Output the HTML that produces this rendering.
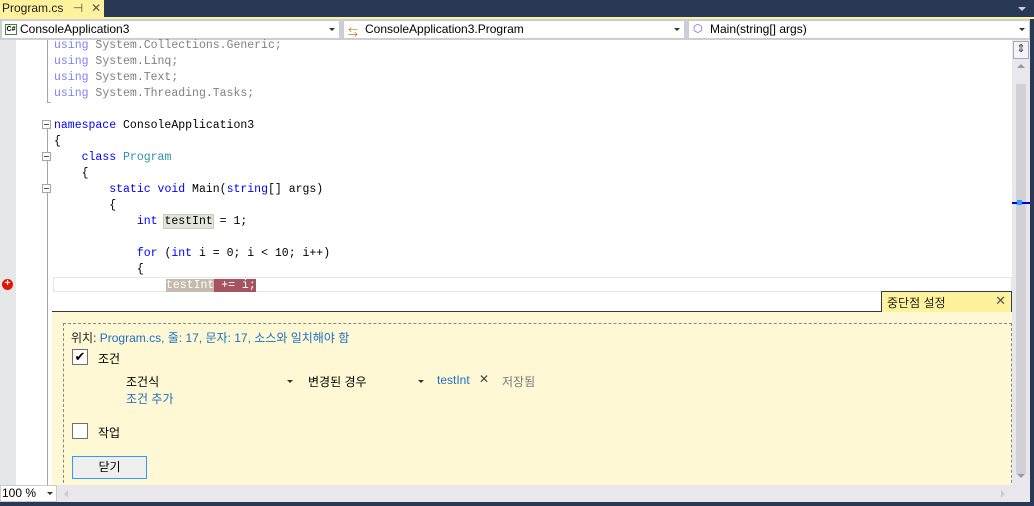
<!DOCTYPE html>
<html><head><meta charset="utf-8"><style>
*{margin:0;padding:0;box-sizing:border-box}
body{width:1034px;height:506px;background:#293955;position:relative;overflow:hidden;font-family:"Segoe UI","Liberation Sans","Noto Sans CJK KR",sans-serif;font-size:12px}
.a{position:absolute}
.tab{left:0;top:0;width:104px;height:18px;background:#fff29d;color:#1e1e1e;font-size:12px;padding:1px 0 0 2px}
.ybar{left:0;top:17px;width:1034px;height:2px;background:#fff29d}
.nav{left:0;top:19px;width:1030px;height:21px;background:#cccedb}
.cb{top:20px;height:19px;background:#fff;border:1px solid #ccc;font-size:12px;color:#000;padding:1px 0 0 18px}
.cb .dd{position:absolute;right:4px;top:7px;border-left:3px solid transparent;border-right:3px solid transparent;border-top:3px solid #333}
.gut{left:0;top:40px;width:16px;height:445px;background:#e6e7e8}
.ed{left:16px;top:40px;width:996px;height:445px;background:#fff}
.code{font-family:"Liberation Mono",monospace;font-size:11.5px;line-height:16px;white-space:pre;color:#000}
.k{color:#0000ff}.t{color:#2b91af}.g{color:#808080}.gk{color:#8080ff}
.ol{left:47px;width:1px;background:#a5a5a5}
.box{left:42px;width:9px;height:9px;border:1px solid #a5a5a5;background:#fff}
.box:after{content:"";position:absolute;left:1px;top:3px;width:5px;height:1px;background:#555}
.vs{left:1012px;top:40px;width:18px;height:445px;background:#e8e8ec}
.hs{left:0;top:485px;width:1030px;height:17px;background:#e8e8ec}
</style></head><body>
<div class="a tab">Program.cs <span style="color:#555;margin-left:6px">⊣</span><span style="color:#555;margin-left:8px">✕</span></div>
<div class="a ybar"></div>
<div class="a nav"></div>
<div class="a cb" style="left:1px;width:339px"><span class="a" style="left:3px;top:3px;width:12px;height:11px;border:1px solid #388a34;font-size:7px;line-height:9px;text-align:center;font-weight:bold">C#</span>ConsoleApplication3<span class="dd"></span></div>
<div class="a cb" style="left:343px;width:342px;padding-left:21px"><span class="a" style="left:4px;top:3px;color:#c27d1a;font-size:10px">⇆</span>ConsoleApplication3.Program<span class="dd"></span></div>
<div class="a cb" style="left:688px;width:342px;padding-left:21px"><span class="a" style="left:4px;top:1px;color:#8a4fc9;font-size:11px">⬡</span>Main(string[] args)<span class="dd"></span></div>
<div class="a" style="left:1018px;top:7px;border-left:4px solid transparent;border-right:4px solid transparent;border-top:4px solid #ccd"></div>
<div class="a gut"></div>
<div class="a ed"></div>
<div class="a ol" style="top:40px;height:63px"></div>
<div class="a" style="left:47px;top:102px;width:4px;height:1px;background:#a5a5a5"></div>
<div class="a ol" style="top:126px;height:359px"></div>
<div class="a box" style="top:120px"></div>
<div class="a box" style="top:152px"></div>
<div class="a box" style="top:184px"></div>
<div class="a code" style="left:54px;top:38px"><span class="gk">using</span> <span class="g">System.Collections.Generic;</span>
<span class="gk">using</span> <span class="g">System.Linq;</span>
<span class="gk">using</span> <span class="g">System.Text;</span>
<span class="gk">using</span> <span class="g">System.Threading.Tasks;</span>

<span class="k">namespace</span> ConsoleApplication3
{
    <span class="k">class</span> <span class="t">Program</span>
    {
        <span class="k">static</span> <span class="k">void</span> Main(<span class="k">string</span>[] args)
        {
            <span class="k">int</span> <span style="background:#e1e5d7;outline:1px solid #c8cbbd">testInt</span> = 1;

            <span class="k">for</span> (<span class="k">int</span> i = 0; i &lt; 10; i++)
            {
</div>
<div class="a" style="left:53px;top:277px;width:959px;height:15px;border:1px solid #e6e6e6"></div>
<div class="a code" style="left:166px;top:278px;color:#fff"><span style="background:#c6b9ad">testInt</span><span style="background:#a5545f"> += i;</span></div>
<div class="a" style="left:2px;top:279px;width:11px;height:11px;border-radius:50%;background:#e51400;color:#fff;font-size:10px;line-height:10px;text-align:center;font-weight:bold">+</div>
<div class="a" style="left:52px;top:311px;width:960px;height:174px;background:#fef9d4;border-top:1px solid #2d3a4f"></div>
<div class="a" style="left:881px;top:291px;width:131px;height:21px;background:#fff29d;border:1px solid #2d3a4f;border-bottom:none;padding:2px 0 0 5px;color:#1e1e1e">중단점 설정<span class="a" style="right:5px;top:1px;color:#555;font-size:13px">✕</span></div>
<div class="a" style="left:63px;top:323px;width:949px;height:170px;border:1px dashed #888;border-bottom:none"></div>
<div class="a" style="left:71px;top:329px;color:#1e1e1e">위치: <span style="color:#1e6fc7">Program.cs, 줄: 17, 문자: 17, 소스와 일치해야 함</span></div>
<div class="a" style="left:72px;top:349px;width:16px;height:16px;border:1px solid #707070;background:#fff;font-size:13px;line-height:14px;text-align:center">✔</div>
<div class="a" style="left:98px;top:350px">조건</div>
<div class="a" style="left:126px;top:373px">조건식</div>
<div class="a" style="left:287px;top:380px;border-left:3px solid transparent;border-right:3px solid transparent;border-top:3px solid #333"></div>
<div class="a" style="left:308px;top:373px">변경된 경우</div>
<div class="a" style="left:418px;top:380px;border-left:3px solid transparent;border-right:3px solid transparent;border-top:3px solid #333"></div>
<div class="a" style="left:437px;top:373px;color:#1e6fc7">testInt</div>
<div class="a" style="left:479px;top:372px;color:#444">✕</div>
<div class="a" style="left:502px;top:373px;color:#777">저장됨</div>
<div class="a" style="left:126px;top:390px;color:#1e6fc7">조건 추가</div>
<div class="a" style="left:72px;top:423px;width:16px;height:16px;border:1px solid #707070;background:#fff"></div>
<div class="a" style="left:98px;top:424px">작업</div>
<div class="a" style="left:72px;top:456px;width:75px;height:23px;border:1px solid #3399ff;background:#efefef;text-align:center;line-height:21px">닫기</div>
<div class="a vs"></div>
<div class="a" style="left:1013px;top:41px;width:16px;height:18px;background:#f4f4f8;border:1px solid #aab;text-align:center;font-size:11px;line-height:14px;color:#333">⇕</div>
<div class="a" style="left:1017px;top:64px;border-left:4px solid transparent;border-right:4px solid transparent;border-bottom:4px solid #999"></div>
<div class="a" style="left:1016px;top:84px;width:10px;height:390px;background:#d0d0d6"></div>
<div class="a" style="left:1012px;top:202px;width:18px;height:2px;background:#0000cc"></div>
<div class="a" style="left:1017px;top:200px;width:5px;height:5px;background:#3399ff"></div>
<div class="a" style="left:1017px;top:474px;border-left:4px solid transparent;border-right:4px solid transparent;border-top:4px solid #999"></div>
<div class="a hs"></div>
<div class="a" style="left:0;top:485px;width:57px;height:17px;background:#fff;border:1px solid #ccc;font-size:12px;padding-left:1px;line-height:15px">100 %<span class="a" style="right:3px;top:6px;border-left:3px solid transparent;border-right:3px solid transparent;border-top:3px solid #333"></span></div>
<div class="a" style="left:64px;top:490px;border-top:4px solid transparent;border-bottom:4px solid transparent;border-right:4px solid #ccc"></div>
<div class="a" style="left:1001px;top:490px;border-top:4px solid transparent;border-bottom:4px solid transparent;border-left:4px solid #ccc"></div>
</body></html>
